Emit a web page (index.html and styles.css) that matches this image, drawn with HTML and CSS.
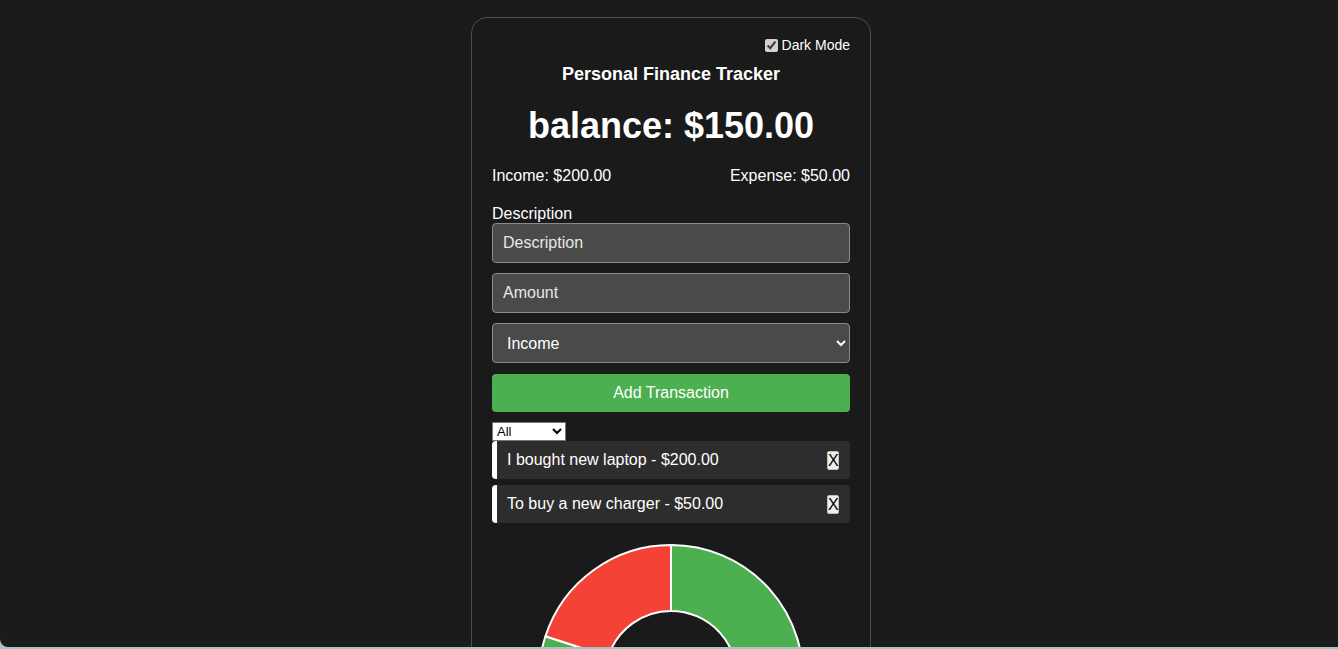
FILE: index.html
```html
<!DOCTYPE html>
<html lang="en">
<head>
<meta charset="utf-8">
<title>Personal Finance Tracker</title>
<link rel="stylesheet" href="styles.css">
</head>
<body>
<div class="page">
  <div class="card">
    <div class="toggle-row">
      <label class="toggle"><input type="checkbox" checked class="toggle-box"> Dark Mode</label>
    </div>
    <h2 class="title">Personal Finance Tracker</h2>
    <h1 class="balance">balance: $150.00</h1>
    <div class="summary">
      <span>Income: $200.00</span>
      <span>Expense: $50.00</span>
    </div>
    <label class="field-label">Description</label>
    <input class="field" type="text" placeholder="Description">
    <input class="field" type="text" placeholder="Amount">
    <select class="field select-field">
      <option>Income</option>
      <option>Expense</option>
    </select>
    <button class="add-btn">Add Transaction</button>
    <select class="filter">
      <option>All</option>
      <option>Income</option>
      <option>Expense</option>
    </select>
    <ul class="list">
      <li class="item"><span>I bought new laptop - $200.00</span><button class="del">X</button></li>
      <li class="item"><span>To buy a new charger - $50.00</span><button class="del">X</button></li>
    </ul>
    <div class="chart">
      <svg width="358" height="300" viewBox="0 0 358 300">
        <path d="M179 10 A132 132 0 1 1 53.45 101.21 L116.23 121.61 A66 66 0 1 0 179 76 Z" fill="#4caf50" stroke="#fff" stroke-width="2" stroke-linejoin="round"/>
        <path d="M53.45 101.21 A132 132 0 0 1 179 10 L179 76 A66 66 0 0 0 116.23 121.61 Z" fill="#f44336" stroke="#fff" stroke-width="2" stroke-linejoin="round"/>
      </svg>
    </div>
  </div>
</div>
</body>
</html>
```

FILE: styles.css
```css
html {
  margin: 0;
  background: #a9c3c6;
}
body {
  margin: 0;
  height: 647px;
  overflow: hidden;
  background: #1b1b1b;
  border-bottom-left-radius: 8px;
  font-family: "Liberation Sans", Arial, sans-serif;
  color: #fff;
}
.page {
  display: flex;
  justify-content: center;
  padding-top: 17px;
  padding-left: 4px;
}
.card {
  width: 358px;
  padding: 20px;
  border: 1px solid #4d4d4d;
  border-radius: 16px;
  background: #1a1a1a;
  display: flex;
  flex-direction: column;
}
.toggle-row {
  display: flex;
  justify-content: flex-end;
  height: 14px;
  align-items: center;
}
.toggle {
  display: flex;
  align-items: center;
  font-size: 14px;
  line-height: 14px;
  color: #fff;
}
.toggle-box {
  width: 13px;
  height: 13px;
  margin: 0 4px 0 0;
  accent-color: #d0d0d0;
}
.title {
  margin: 12px 0 0;
  font-size: 18px;
  line-height: 21px;
  font-weight: bold;
  text-align: center;
}
.balance {
  margin: 20px 0 0;
  font-size: 36px;
  line-height: 42px;
  font-weight: bold;
  text-align: center;
}
.summary {
  display: flex;
  justify-content: space-between;
  margin-top: 20px;
  font-size: 16px;
  line-height: 18px;
}
.field-label {
  margin-top: 20px;
  margin-bottom: 0;
  font-size: 16px;
  line-height: 18px;
}
.field {
  box-sizing: border-box;
  width: 358px;
  height: 40px;
  margin: 0 0 10px;
  padding: 10px;
  border: 1px solid #8a8a8a;
  border-radius: 4px;
  background: #4a4a4a;
  color: #fff;
  font-family: "Liberation Sans", Arial, sans-serif;
  font-size: 16px;
  line-height: 18px;
}
.field::placeholder {
  color: #e8e8e8;
}
.select-field {
  padding: 0 8px 0 10px;
  color-scheme: dark;
}
.add-btn {
  margin-top: 1px;
  height: 38px;
  border: none;
  border-radius: 4px;
  background: #4caf50;
  color: #fff;
  font-family: "Liberation Sans", Arial, sans-serif;
  font-size: 16px;
  line-height: 18px;
  padding: 10px;
}
.filter {
  align-self: flex-start;
  margin-top: 10px;
  width: 74px;
  height: 19px;
  padding: 0;
  border: 1px solid #767676;
  border-radius: 0;
  background: #fff;
  color: #000;
  font-family: "Liberation Sans", Arial, sans-serif;
  font-size: 13px;
  color-scheme: light;
}
.list {
  list-style: none;
  margin: 0;
  padding: 0;
  display: flex;
  flex-direction: column;
  gap: 6px;
}
.item {
  display: flex;
  justify-content: space-between;
  align-items: center;
  height: 38px;
  box-sizing: border-box;
  padding: 0 11px 0 10px;
  border-left: 5px solid #fff;
  border-radius: 4px;
  background: #2d2d2d;
  font-size: 16px;
  line-height: 18px;
}
.del {
  width: 12px;
  height: 19px;
  padding: 0;
  border: 1px solid #bdbdbd;
  border-radius: 2px;
  background: #efefef;
  color: #000;
  font-family: "Liberation Sans", Arial, sans-serif;
  font-size: 16px;
  line-height: 17px;
}
.chart {
  margin-top: 12px;
  display: flex;
  justify-content: center;
}
```
